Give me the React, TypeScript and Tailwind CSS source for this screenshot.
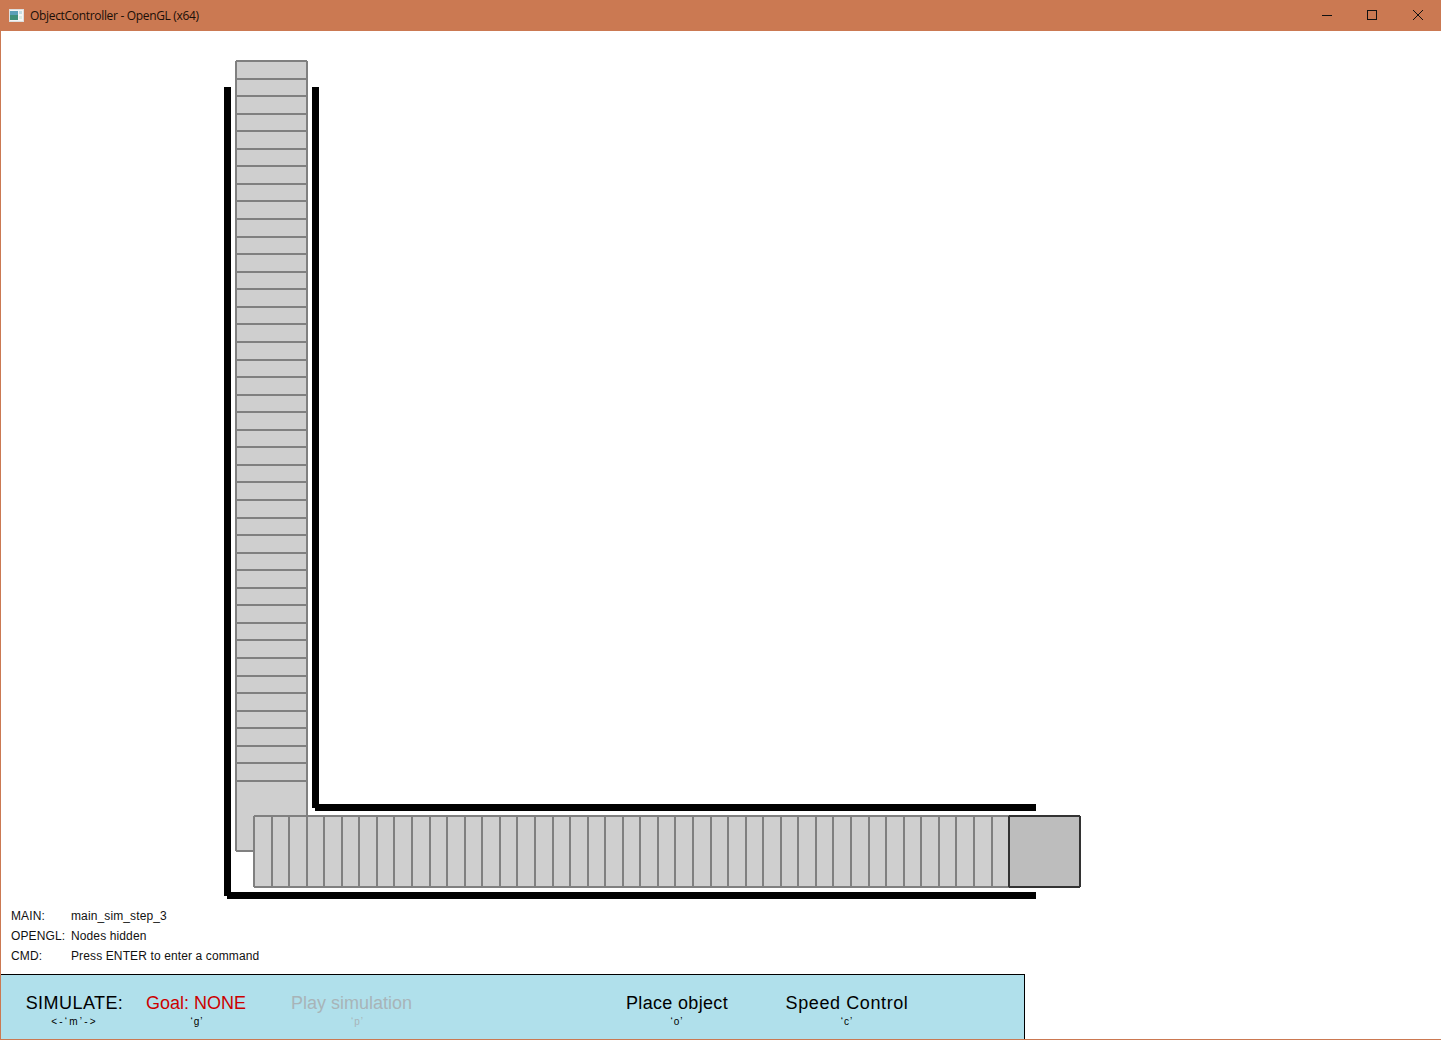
const STEP = 17.56;
const GRAY = "#808080";
const vert = Array.from({ length: 42 }, (_, i) => Math.round(61 + i * STEP));
const horiz = Array.from({ length: 44 }, (_, i) => Math.round(254 + i * STEP));

// Simulation drawing coordinates are page coordinates; the svg starts below the title bar.
function Simulation() {
  return (
    <svg width="1100" height="875" viewBox="0 31 1100 875" shapeRendering="crispEdges" className="block">
      {/* walls */}
      <rect x="224" y="87" width="7" height="809" fill="#000" />
      <rect x="227" y="892" width="809" height="7" fill="#000" />
      <rect x="312" y="87" width="7" height="721" fill="#000" />
      <rect x="315" y="804" width="721" height="7" fill="#000" />
      {/* vertical body */}
      <rect x="236" y="61" width="71" height="790" fill="#cfcfcf" />
      {vert.map((y) => (
        <rect key={y} x="236" y={y - 1} width="71" height="2" fill={GRAY} />
      ))}
      <rect x="235" y="61" width="2" height="790" fill={GRAY} />
      <rect x="306" y="61" width="2" height="790" fill={GRAY} />
      <rect x="236" y="850" width="71" height="2" fill={GRAY} />
      {/* horizontal body */}
      <rect x="254" y="816" width="755" height="71" fill="#cfcfcf" />
      <rect x="254" y="815" width="755" height="2" fill={GRAY} />
      <rect x="254" y="886" width="755" height="2" fill={GRAY} />
      {horiz.map((x) => (
        <rect key={x} x={x - 1} y="816" width="2" height="71" fill={GRAY} />
      ))}
      {/* head */}
      <rect x="1009" y="816" width="71" height="71" fill="#bdbdbd" />
      <rect x="1009" y="815" width="71" height="2" fill="#333" />
      <rect x="1009" y="886" width="71" height="2" fill="#333" />
      <rect x="1008" y="816" width="2" height="71" fill="#333" />
      <rect x="1079" y="816" width="2" height="71" fill="#333" />
    </svg>
  );
}

function PanelItem({ label, keyText, color, width, tracking, keyClass, keyColor }: { label: string; keyText: string; color: string; width: string; tracking?: string; keyClass?: string; keyColor?: string }) {
  return (
    <div className={`flex flex-col items-center shrink-0 ${width}`}>
      <div className={`text-[18px] leading-[20px] whitespace-nowrap ${color} ${tracking ?? ""}`}>{label}</div>
      <div className={`text-[10px] leading-[12px] mt-[3px] whitespace-nowrap ${keyColor ?? color} ${keyClass ?? "tracking-[1px]"}`}>{keyText}</div>
    </div>
  );
}

export default function App() {
  return (
    <div className="w-[1441px] h-[1040px] flex flex-col overflow-hidden bg-white font-['Liberation_Sans',Arial,sans-serif]">
      <header className="h-[31px] shrink-0 bg-[#cb7952] flex items-center justify-between pr-px">
        <div className="flex items-center pl-[9px]">
          <svg width="15" height="13" viewBox="0 0 15 13" shapeRendering="crispEdges" className="block">
            <rect x="0" y="0" width="15" height="13" fill="#dedede" />
            <rect x="1" y="1" width="13" height="11" fill="#f5f5f5" />
            <rect x="1" y="2" width="8" height="4" fill="#5a9fb8" />
            <rect x="1" y="6" width="8" height="5" fill="#3f8f78" />
            <rect x="10" y="2" width="3" height="3" fill="#c4dde4" />
            <rect x="10" y="7" width="3" height="3" fill="#dcebe4" />
          </svg>
          <span className="ml-[6px] mt-px text-[12px] leading-[16px] text-[#1a0f08] font-['Open_Sans',sans-serif] tracking-[-0.32px]">ObjectController - OpenGL (x64)</span>
        </div>
        <div className="flex">
          <div className="w-[45px] h-[31px] flex items-center justify-center">
            <svg width="11" height="11" viewBox="0 0 11 11" shapeRendering="crispEdges" className="block"><rect x="0" y="5" width="10" height="1" fill="#111" /></svg>
          </div>
          <div className="w-[45px] h-[31px] flex items-center justify-center">
            <svg width="11" height="11" viewBox="0 0 11 11" shapeRendering="crispEdges" className="block"><rect x="0.5" y="0.5" width="9" height="9" fill="none" stroke="#111" /></svg>
          </div>
          <div className="w-[45px] h-[31px] flex items-center justify-center pl-[2px]">
            <svg width="11" height="11" viewBox="0 0 11 11" className="block"><path d="M0 0L10 10M10 0L0 10" fill="none" stroke="#111" /></svg>
          </div>
        </div>
      </header>
      <main className="flex-1 min-h-0 flex flex-col border-l border-b border-[#cb7952]">
        <div className="-ml-px h-[875px] shrink-0"><Simulation /></div>
        <div className="grid grid-cols-[60px_1fr] pl-[10px] text-[12px] leading-[20px] tracking-[0.12px] text-[#111] h-[60px]">
          <div>MAIN:</div><div>main_sim_step_3</div>
          <div>OPENGL:</div><div>Nodes hidden</div>
          <div>CMD:</div><div>Press ENTER to enter a command</div>
        </div>
        <div className="mt-[8px] w-[1024px] h-[65px] border-t border-r border-black bg-[#b0e0eb] flex items-start pt-[18px] pl-[25px]">
          <PanelItem label="SIMULATE:" keyText="<-‘m’->" color="text-black" width="w-[97px]" tracking="tracking-[0.44px]" keyClass="tracking-[2.2px]" />
          <div className="w-[23px] shrink-0" />
          <PanelItem label="Goal: NONE" keyText="‘g’" color="text-[#cc0000]" keyColor="text-black" width="w-[100px]" keyClass="pl-[2px] tracking-[1px]" />
          <div className="w-[45px] shrink-0" />
          <PanelItem label="Play simulation" keyText="‘p’" color="text-[#a8b4b8]" width="w-[121px]" keyClass="pl-[12px] tracking-[1px]" />
          <div className="w-[214px] shrink-0" />
          <PanelItem label="Place object" keyText="‘o’" color="text-black" width="w-[102px]" tracking="tracking-[0.33px]" />
          <div className="w-[58px] shrink-0" />
          <PanelItem label="Speed Control" keyText="‘c’" color="text-black" width="w-[122px]" tracking="tracking-[0.6px]" />
        </div>
      </main>
    </div>
  );
}
